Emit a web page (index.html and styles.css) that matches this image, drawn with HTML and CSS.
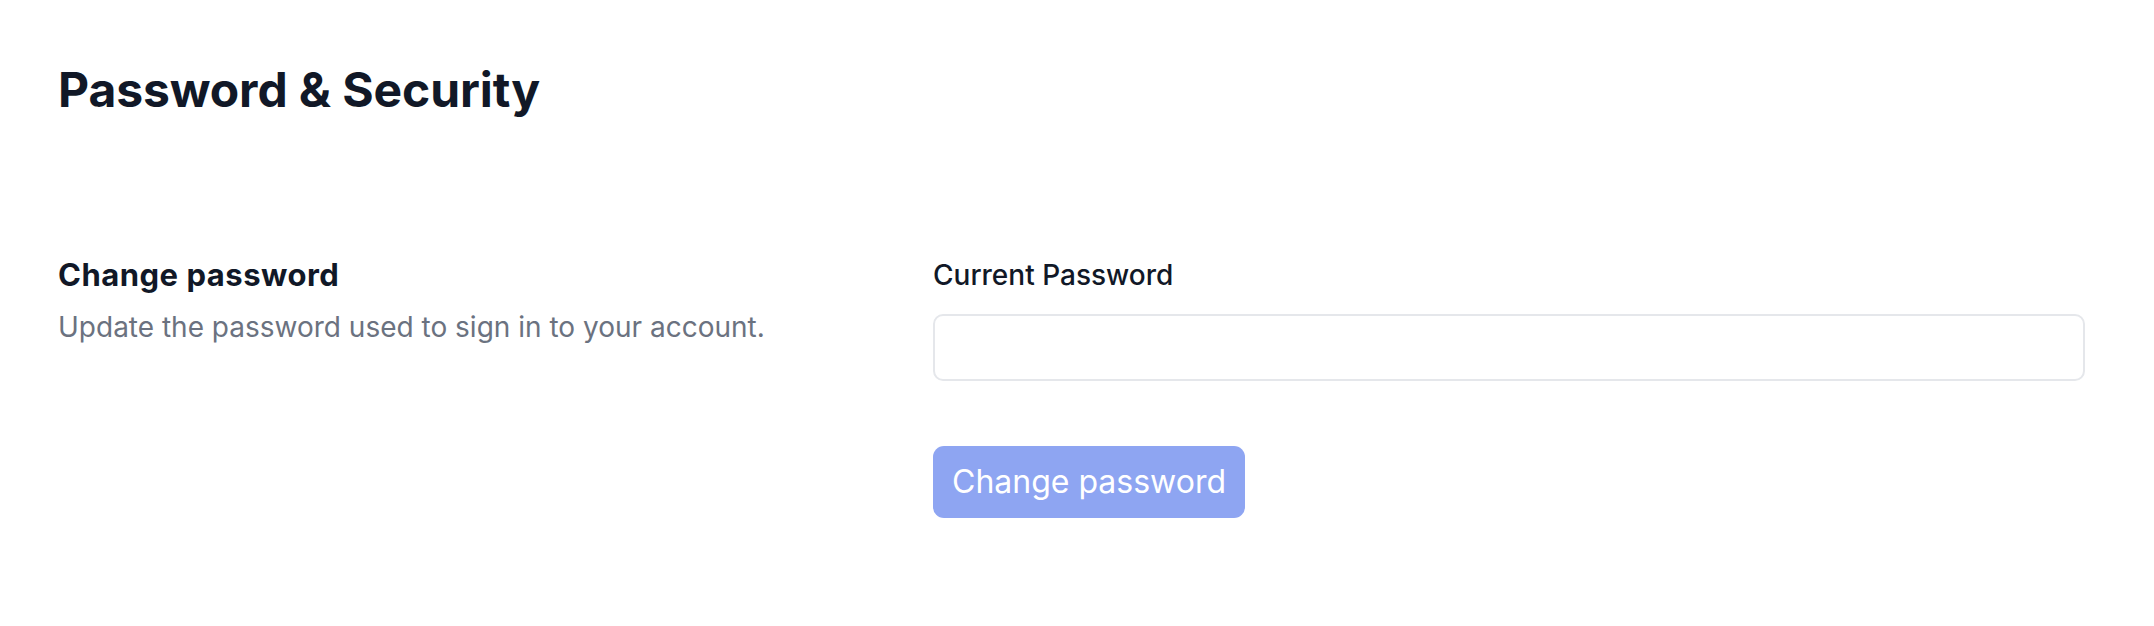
FILE: index.html
```html
<!DOCTYPE html>
<html lang="en">
<head>
<meta charset="utf-8">
<title>Password &amp; Security</title>
<link rel="stylesheet" href="styles.css">
</head>
<body>
<main class="page">
  <h1 class="page-title">Password &amp; Security</h1>
  <section class="settings-row">
    <div class="settings-info">
      <h2 class="section-title">Change password</h2>
      <p class="section-desc">Update the password used to sign in to your account.</p>
    </div>
    <form class="settings-form">
      <label class="field-label" for="current-password">Current Password</label>
      <input class="field-input" id="current-password" type="password">
      <div class="actions">
        <button class="btn-primary" type="button">Change password</button>
      </div>
    </form>
  </section>
</main>
</body>
</html>
```

FILE: styles.css
```css
* { box-sizing: border-box; }
html, body { margin: 0; padding: 0; background: #ffffff; }
body {
  font-family: Inter, "Noto Sans", "Liberation Sans", sans-serif;
  color: #111827;
}
.page {
  padding: 62px 69px 0 58px;
}
.page-title {
  margin: 0;
  font-size: 48px;
  line-height: 56px;
  font-weight: 700;
  color: #111827;
  letter-spacing: -0.1px;
}
.settings-row {
  margin-top: 138px;
  display: grid;
  grid-template-columns: 875px 1fr;
}
.settings-info {
  padding-top: 1px;
}
.section-title {
  margin: 0;
  font-size: 31px;
  line-height: 36px;
  font-weight: 700;
  color: #111827;
  letter-spacing: 0.5px;
}
.section-desc {
  margin: 16px 0 0;
  font-size: 28px;
  line-height: 36px;
  color: #6b7280;
}
.settings-form {
  display: flex;
  flex-direction: column;
  margin: 0;
  padding-top: 1px;
}
.field-label {
  font-size: 28px;
  line-height: 36px;
  font-weight: 500;
  color: #111827;
}
.field-input {
  margin-top: 21px;
  height: 67px;
  width: 100%;
  border: 2px solid #e5e7eb;
  border-radius: 10px;
  background: #ffffff;
  font: inherit;
  padding: 0 18px;
  outline: none;
}
.actions {
  margin-top: 65px;
  display: flex;
}
.btn-primary {
  height: 72px;
  padding: 0 19px;
  border: 0;
  border-radius: 11px;
  background: #8ea5f2;
  color: #ffffff;
  font-family: Inter, "Noto Sans", "Liberation Sans", sans-serif;
  font-size: 32px;
  line-height: 40px;
  font-weight: 400;
}
```
